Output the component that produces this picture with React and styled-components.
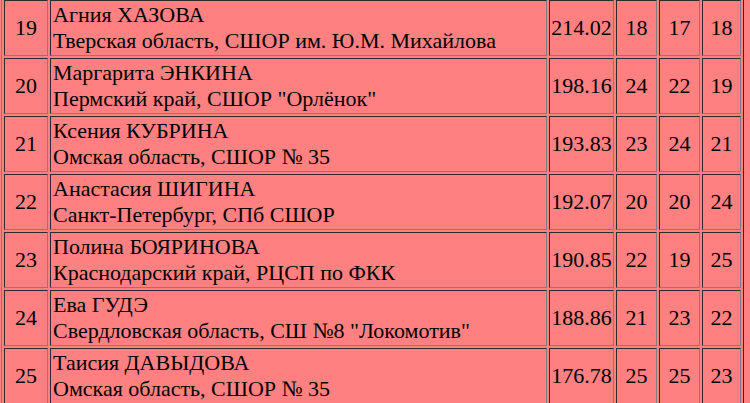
import React from 'react'
import styled, { createGlobalStyle } from 'styled-components'

const GlobalStyle = createGlobalStyle`
  body {
    margin: 0;
    background: #ff8080;
    font-family: "Times New Roman", Times, "Liberation Serif", Tinos, serif;
  }
`

const Results = styled.div`
  box-sizing: border-box;
  width: 743px;
  margin: -3px 0 0 1px;
  padding: 2px;
  display: grid;
  grid-template-columns: 44px 1fr 65px 41px 41px 39px;
  gap: 2px;
  border: 1px outset gray;
  font-family: "Times New Roman", Times, "Liberation Serif", Tinos, serif;
  font-size: 22px;
  color: #000;
`

const Cell = styled.div`
  box-sizing: border-box;
  border: 1px inset gray;
  padding: 1px 2px;
  display: flex;
  flex-direction: column;
  justify-content: center;
  align-items: ${p => (p.$center ? 'center' : 'flex-start')};
  white-space: nowrap;
`

const rows = [
  [19, 'Агния ХАЗОВА', 'Тверская область, СШОР им. Ю.М. Михайлова', '214.02', [18, 17, 18]],
  [20, 'Маргарита ЭНКИНА', 'Пермский край, СШОР "Орлёнок"', '198.16', [24, 22, 19]],
  [21, 'Ксения КУБРИНА', 'Омская область, СШОР № 35', '193.83', [23, 24, 21]],
  [22, 'Анастасия ШИГИНА', 'Санкт-Петербург, СПб СШОР', '192.07', [20, 20, 24]],
  [23, 'Полина БОЯРИНОВА', 'Краснодарский край, РЦСП по ФКК', '190.85', [22, 19, 25]],
  [24, 'Ева ГУДЭ', 'Свердловская область, СШ №8 "Локомотив"', '188.86', [21, 23, 22]],
  [25, 'Таисия ДАВЫДОВА', 'Омская область, СШОР № 35', '176.78', [25, 25, 23]],
]

export default function App() {
  return (
    <>
      <GlobalStyle />
      <Results>
        {rows.map(([place, name, club, score, places]) => (
          <React.Fragment key={place}>
            <Cell $center>{place}</Cell>
            <Cell>
              <span>{name}</span>
              <span>{club}</span>
            </Cell>
            <Cell $center>{score}</Cell>
            {places.map((p, i) => (
              <Cell key={i} $center>{p}</Cell>
            ))}
          </React.Fragment>
        ))}
      </Results>
    </>
  )
}
